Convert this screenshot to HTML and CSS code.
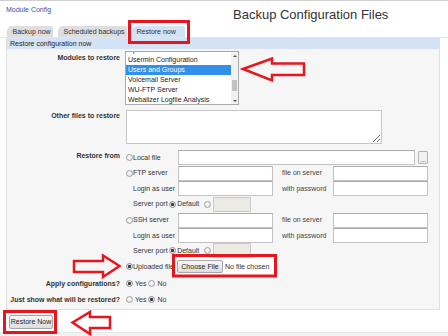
FILE: index.html
```html
<!DOCTYPE html>
<html lang="en">
<head>
<meta charset="utf-8">
<title>Backup Configuration Files</title>
<link rel="stylesheet" href="styles.css">
</head>
<body>
<div class="page">
  <header class="top">
    <a class="modcfg" href="#">Module Config</a>
    <h1 class="title">Backup Configuration Files</h1>
  </header>
  <nav class="tabs">
    <span class="tab tab-1">Backup now</span>
    <span class="tab tab-2">Scheduled backups</span>
    <span class="tab tab-3 active">Restore now</span>
  </nav>
  <section class="panel">
    <div class="panel-head">Restore configuration now</div>
    <div class="panel-body">
      <div class="frow r-modules">
        <div class="lbl">Modules to restore</div>
        <div class="listbox">
          <div class="opts">
            <div class="opts-in">
              <div class="opt">Upload and Download</div>
              <div class="opt">Usermin Configuration</div>
              <div class="opt sel">Users and Groups</div>
              <div class="opt">Voicemail Server</div>
              <div class="opt">WU-FTP Server</div>
              <div class="opt">Webalizer Logfile Analysis</div>
            </div>
          </div>
          <div class="sbar">
            <span class="sb-btn up"></span>
            <span class="sb-track"><span class="sb-thumb"></span></span>
            <span class="sb-btn down"></span>
          </div>
        </div>
      </div>

      <div class="frow r-other">
        <div class="lbl">Other files to restore</div>
        <div><textarea class="ta"></textarea></div>
      </div>

      <div class="frow r-from">
        <div class="lbl">Restore from</div>
        <div class="from-grid">
          <label class="opt-radio"><input class="rd" type="radio" name="src">Local file</label>
          <div class="local"><input class="txt wide" type="text"><button class="dots" type="button">...</button></div>

          <label class="opt-radio"><input class="rd" type="radio" name="src">FTP server</label>
          <input class="txt" type="text">
          <span class="sub">file on server</span>
          <input class="txt" type="text">

          <span class="ind">Login as user</span>
          <input class="txt" type="text">
          <span class="sub">with password</span>
          <input class="txt" type="password">

          <div class="port">
            <span class="ind">Server port</span>
            <input class="rd rd-def" type="radio" name="fport" checked>
            <span>Default</span>
            <input class="rd rd-other" type="radio" name="fport">
            <input class="txt port-in" type="text" disabled>
          </div>

          <label class="opt-radio"><input class="rd" type="radio" name="src">SSH server</label>
          <input class="txt" type="text">
          <span class="sub">file on server</span>
          <input class="txt" type="text">

          <span class="ind">Login as user</span>
          <input class="txt" type="text">
          <span class="sub">with password</span>
          <input class="txt" type="password">

          <div class="port">
            <span class="ind">Server port</span>
            <input class="rd rd-def" type="radio" name="sport" checked>
            <span>Default</span>
            <input class="rd rd-other" type="radio" name="sport">
            <input class="txt port-in" type="text" disabled>
          </div>

          <label class="opt-radio"><input class="rd" type="radio" name="src" checked>Uploaded file</label>
          <div class="file"><button class="btn btn-file" type="button">Choose File</button><span class="nofile">No file chosen</span></div>
        </div>
      </div>

      <div class="frow r-yn r-apply">
        <div class="lbl">Apply configurations?</div>
        <div class="yn">
          <label><input class="rd" type="radio" name="apply" checked>Yes</label>
          <label><input class="rd" type="radio" name="apply">No</label>
        </div>
      </div>

      <div class="frow r-yn r-just">
        <div class="lbl">Just show what will be restored?</div>
        <div class="yn">
          <label><input class="rd" type="radio" name="test">Yes</label>
          <label><input class="rd" type="radio" name="test" checked>No</label>
        </div>
      </div>
    </div>
  </section>

  <div class="actions"><button class="btn btn-restore" type="button">Restore Now</button></div>
  <div class="foot"></div>

  <svg class="annot" width="448" height="336" viewBox="0 0 448 336" aria-hidden="true">
    <g fill="none" stroke="#e5161e" stroke-width="3">
      <rect x="129.5" y="21.5" width="59" height="21"/>
      <rect x="173.5" y="255.5" width="102" height="20.5"/>
      <rect x="4.5" y="311.5" width="51" height="21"/>
    </g>
    <g fill="none" stroke="#e5161e" stroke-width="2.5">
      <polygon points="243,69 272,58.5 272,63.5 304,63.5 304,75 272,75 272,80.5"/>
      <polygon points="119.5,266 103,255.5 103,261 74,261 74,272 103,272 103,277"/>
      <polygon points="72.5,322.5 90,312 90,317 110,317 110,328 90,328 90,334"/>
    </g>
  </svg>
</div>
</body>
</html>
```

FILE: styles.css
```css
* { box-sizing: border-box; }

html, body {
  margin: 0;
  padding: 0;
}

body {
  width: 448px;
  height: 336px;
  overflow: hidden;
  background: #ffffff;
  font-family: "Liberation Sans", Arial, sans-serif;
  font-size: 7px;
  line-height: 8px;
  color: #333333;
}

.page {
  position: relative;
  width: 448px;
  height: 336px;
  overflow: hidden;
}

/* header */
.top {
  display: flex;
  align-items: flex-start;
  height: 26px;
  border-top: 1px solid #cfcfcf;
}

.modcfg {
  margin: 5px 0 0 6px;
  width: 227px;
  color: #2f55a4;
  text-decoration: none;
  line-height: 8px;
}

.title {
  margin: 6px 0 0 0;
  font-size: 13px;
  line-height: 15px;
  font-weight: normal;
  color: #333333;
}

/* tabs */
.tabs {
  display: flex;
  gap: 5px;
  height: 12px;
  padding-left: 7px;
  border-bottom: 1px solid #e6e6e6;
}

.tab {
  height: 11px;
  line-height: 11px;
  padding-left: 5.5px;
  background: #dedede;
  border-radius: 5px 2px 0 0;
  color: #333333;
  white-space: nowrap;
}

.tab-1 { width: 46px; }
.tab-2 { width: 69px; }
.tab-3 { width: 53px; padding-left: 4.5px; }

.tab.active { background: #d4e2f6; }

/* panel */
.panel {
  margin-left: 6px;
  width: 434px;
  border: 1px solid #e0e0e0;
  border-top: 0;
  background: #f6f6f6;
}

.panel-head {
  height: 11px;
  line-height: 11px;
  padding-left: 3px;
  background: #d4e2f6;
  color: #222222;
}

.panel-body {
  padding: 2px 0 2px 0;
}

.frow {
  display: grid;
  grid-template-columns: 113px auto;
  column-gap: 5px;
}

.lbl {
  text-align: right;
  font-weight: bold;
  line-height: 8px;
  color: #333333;
  white-space: nowrap;
}

.r-modules .lbl { padding-top: 3px; }

.r-other { margin-top: 5px; }
.r-other .lbl { padding-top: 2px; }

.r-from { margin-top: 6px; }
.r-from .lbl { padding-top: 2px; }

.r-yn { align-items: center; }
.r-apply { margin-top: 2px; height: 13px; }
.r-just { margin-top: 2px; height: 15px; }

/* listbox */
.listbox {
  display: flex;
  width: 114px;
  height: 54px;
  border: 1px solid #a9a9a9;
  background: #ffffff;
}

.opts {
  flex: 1;
  overflow: hidden;
}

.opts-in { margin-top: -7px; }

.opt {
  height: 10px;
  line-height: 10px;
  padding-left: 2px;
  white-space: nowrap;
  color: #222222;
}

.opt.sel {
  background: #3390ea;
  color: #ffffff;
}

.sbar {
  width: 7px;
  display: flex;
  flex-direction: column;
  background: #f1f1f1;
}

.sb-btn {
  height: 7px;
  display: flex;
  align-items: center;
  justify-content: center;
}

.sb-btn::before {
  content: "";
  border-left: 2px solid transparent;
  border-right: 2px solid transparent;
}

.sb-btn.up::before { border-bottom: 2px solid #505050; }
.sb-btn.down::before { border-top: 2px solid #505050; }

.sb-track { flex: 1; }

.sb-thumb {
  display: block;
  margin: 21px 1px 0 1px;
  height: 11px;
  background: #c1c1c1;
}

/* textarea */
.ta {
  display: block;
  margin: 0 0 0 1px;
  width: 256px;
  height: 34px;
  border: 1px solid #c6c6c6;
  background: #ffffff;
  font: inherit;
  padding: 1px;
  resize: both;
}

/* restore from grid */
.from-grid {
  display: grid;
  grid-template-columns: 53px 95px 60px 95px;
  grid-template-rows: 15px 16px 15px 16px 16px 15px 15px 17px;
  align-items: center;
}

.opt-radio {
  display: flex;
  align-items: center;
  padding-left: 1px;
  white-space: nowrap;
}

.ind {
  padding-left: 8px;
  white-space: nowrap;
}

.sub {
  padding-left: 9px;
  color: #444444;
  white-space: nowrap;
}

.txt {
  display: block;
  width: 95px;
  height: 15px;
  margin: 0;
  padding: 0 2px;
  border: 1px solid #c2c2c2;
  border-top-color: #ababab;
  background: #ffffff;
  font: inherit;
}

.local {
  grid-column: 2 / -1;
  display: flex;
  align-items: center;
}

.txt.wide { width: 246px; }

.dots {
  margin: 0 0 0 3px;
  width: 10px;
  height: 13px;
  padding: 4px 0 0 0;
  border: 1px solid #b4b4b4;
  border-radius: 1px;
  background: #f2f2f2;
  font: inherit;
  line-height: 8px;
  color: #444444;
  text-align: center;
}

.port {
  grid-column: 1 / -1;
  display: flex;
  align-items: center;
  white-space: nowrap;
}

.rd-def { margin: 0 1px 0 1.5px !important; }
.rd-other { margin: 0 0 0 5px !important; }

.txt.port-in {
  width: 38px;
  margin-left: 2px;
  background: #ebebe4;
  border-color: #cacaca;
}

.file {
  grid-column: 2 / -1;
  display: flex;
  align-items: center;
  gap: 2px;
  margin-left: -3px;
  padding: 2px 3px 2px 2px;
  width: 99px;
  height: 17px;
  background: #ffffff;
  white-space: nowrap;
}

.nofile { color: #333333; }

/* radios */
.rd {
  -webkit-appearance: none;
  appearance: none;
  flex: none;
  width: 7px;
  height: 7px;
  margin: 0;
  border: 1px solid #a3a3a3;
  border-radius: 50%;
  background: radial-gradient(circle at 50% 40%, #ffffff, #dadada);
}

.rd:checked {
  background: radial-gradient(circle, #3a3a3a 0 1.3px, #e6e6e6 1.9px);
  border-color: #8e8e8e;
}

.yn {
  display: flex;
  align-items: center;
  padding-left: 1px;
}

.yn label {
  display: flex;
  align-items: center;
}

.yn .rd { margin-right: 2px; }
.yn label + label { margin-left: 2px; }

/* buttons */
.btn {
  margin: 0;
  padding: 0;
  height: 13px;
  line-height: 11px;
  border: 1px solid #a7a7a7;
  border-radius: 2px;
  background: linear-gradient(#f7f7f7, #dddddd);
  font: inherit;
  color: #222222;
  text-align: center;
  white-space: nowrap;
}

.btn-file { width: 46px; flex: none; }

.actions { padding: 5px 0 0 9px; }

.btn-restore {
  width: 44px;
  height: 14px;
  line-height: 12px;
}

.foot {
  margin-top: 3px;
  height: 8px;
  background: #f2f2f2;
  border-top: 1px solid #e6e6e6;
}

/* annotations drawn over the screenshot */
.annot {
  position: absolute;
  left: 0;
  top: 0;
  pointer-events: none;
}
```
